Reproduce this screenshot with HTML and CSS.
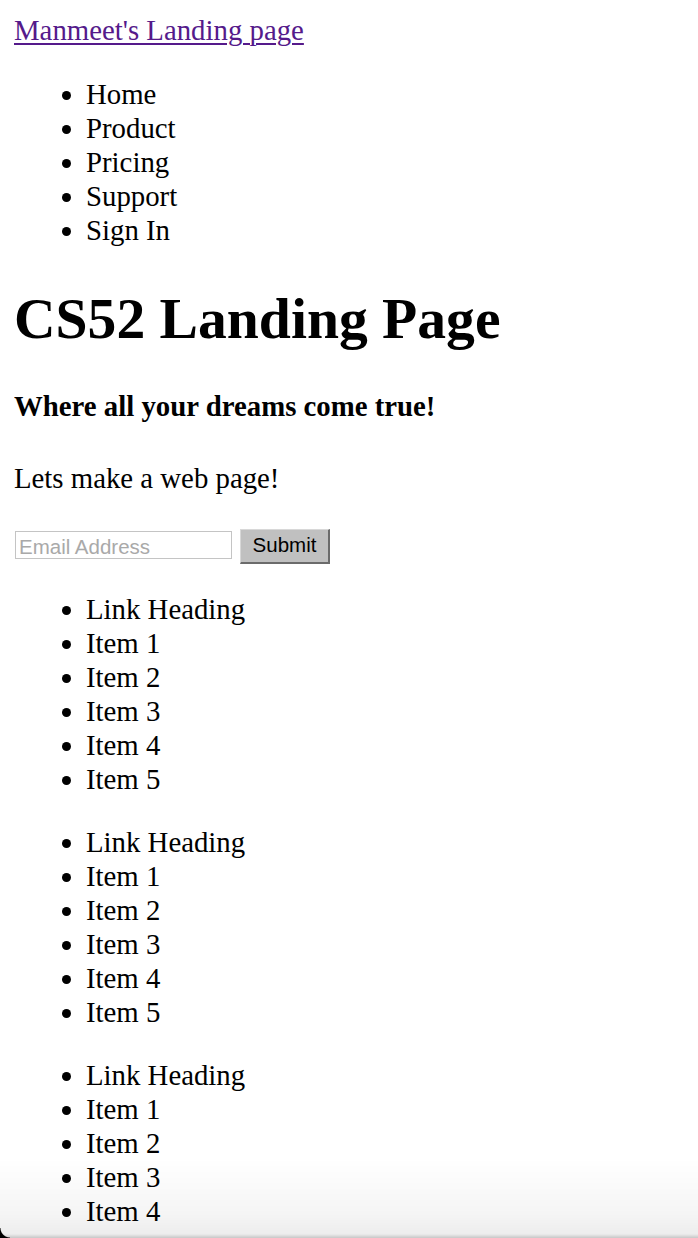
FILE: index.html
```html
<!DOCTYPE html>
<html>
<head>
<meta charset="utf-8">
<title>CS52 Landing Page</title>
<link rel="stylesheet" href="styles.css">
</head>
<body>
<header class="top">
  <a class="brand" href="#">Manmeet's Landing page</a>
  <ul class="list nav">
    <li>Home</li>
    <li>Product</li>
    <li>Pricing</li>
    <li>Support</li>
    <li>Sign In</li>
  </ul>
</header>
<main>
  <h1 class="title">CS52 Landing Page</h1>
  <h4 class="tagline">Where all your dreams come true!</h4>
  <p class="intro">Lets make a web page!</p>
  <form class="signup">
    <input class="email" type="text" placeholder="Email Address">
    <button class="submit" type="button">Submit</button>
  </form>
  <ul class="list links">
    <li>Link Heading</li>
    <li>Item 1</li>
    <li>Item 2</li>
    <li>Item 3</li>
    <li>Item 4</li>
    <li>Item 5</li>
  </ul>
  <ul class="list links">
    <li>Link Heading</li>
    <li>Item 1</li>
    <li>Item 2</li>
    <li>Item 3</li>
    <li>Item 4</li>
    <li>Item 5</li>
  </ul>
  <ul class="list links">
    <li>Link Heading</li>
    <li>Item 1</li>
    <li>Item 2</li>
    <li>Item 3</li>
    <li>Item 4</li>
    <li>Item 5</li>
  </ul>
</main>
<div class="window-shade"></div>
<div class="window-corner"></div>
</body>
</html>
```

FILE: styles.css
```css
html, body {
  background: #fff;
}
body {
  margin: 13px 14px 14px;
  font-family: "Liberation Serif", "Times New Roman", serif;
  font-size: 28.8px;
  line-height: 34px;
  color: #000;
  overflow: hidden;
  height: 1210px;
}
.brand {
  color: #551a8b;
  text-decoration: underline;
  text-underline-offset: 3px;
  text-decoration-thickness: 2px;
}
.top {
  display: block;
}
.list {
  margin: 0;
  padding-left: 72px;
  list-style: disc;
}
.nav {
  margin-top: 30px;
}
.title {
  font-size: 57.6px;
  line-height: 64px;
  font-weight: bold;
  margin: 40px 0 0;
}
.tagline {
  font-size: 28.8px;
  line-height: 34px;
  font-weight: bold;
  margin: 38px 0 0;
}
.intro {
  margin: 38px 0 0;
}
.signup {
  margin: 34px 0 0;
  display: flex;
  align-items: flex-start;
  gap: 8px;
  height: 34px;
}
.email {
  box-sizing: border-box;
  width: 217px;
  height: 28px;
  margin: 2px 0 0 1px;
  padding: 3px 3px 0;
  border: 1px solid #c4c4c4;
  font-family: "Liberation Sans", Arial, sans-serif;
  font-size: 20.5px;
  color: #000;
  background: #fff;
  outline: none;
}
.email::placeholder {
  color: #a9a9a9;
}
.submit {
  box-sizing: border-box;
  width: 90px;
  height: 35px;
  margin: 0;
  padding: 0 0 2px;
  background: #c0c0c0;
  border-style: solid;
  border-width: 1px 2px 2px 1px;
  border-color: #d8d8d8 #6b6b6b #6b6b6b #d8d8d8;
  font-family: "Liberation Sans", Arial, sans-serif;
  font-size: 20.5px;
  color: #000;
}
.links {
  margin-top: 29px;
}
.window-shade {
  position: fixed;
  left: 0;
  right: 0;
  bottom: 0;
  height: 80px;
  background: linear-gradient(to bottom, rgba(0,0,0,0) 0%, rgba(0,0,0,0.04) 70%, rgba(0,0,0,0.07) 95%, rgba(0,0,0,0.22) 100%);
  pointer-events: none;
}
.window-corner {
  position: fixed;
  left: 0;
  bottom: 0;
  width: 10px;
  height: 10px;
  background: radial-gradient(circle at 100% 0%, transparent 9px, #000 10px);
  pointer-events: none;
}
```
